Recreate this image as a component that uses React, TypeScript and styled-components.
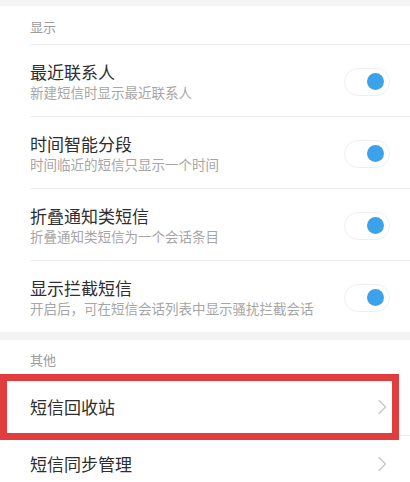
import React from "react";
import styled, { createGlobalStyle } from "styled-components";

const GlobalStyle = createGlobalStyle`
  html, body { margin: 0; padding: 0; background: #ffffff; }
  body { font-family: "Noto Sans CJK SC", "Noto Sans", sans-serif; -webkit-font-smoothing: antialiased; }
  * { box-sizing: border-box; }
`;

const Page = styled.div`
  display: flex;
  flex-direction: column;
  width: 410px;
  height: 482px;
  overflow: hidden;
  background: #ffffff;
`;

const Band = styled.div<{ $h: number }>`
  height: ${(p) => p.$h}px;
  flex: none;
  background: #f4f4f4;
`;

const SectionHeader = styled.div<{ $h: number; $pt: number }>`
  height: ${(p) => p.$h}px;
  flex: none;
  padding: ${(p) => p.$pt}px 0 0 30px;
  font-size: 13px;
  line-height: 18px;
  color: #9c9c9c;
`;

const Divider = styled.div`
  height: 1px;
  flex: none;
  margin-left: 30px;
  background: #ededed;
`;

const ToggleRowBox = styled.div<{ $h: number }>`
  height: ${(p) => p.$h}px;
  flex: none;
  display: flex;
  align-items: center;
  justify-content: space-between;
  padding: 2px 20px 0 30px;
`;

const TextBlock = styled.div`
  display: flex;
  flex-direction: column;
`;

const Title = styled.div`
  font-size: 17px;
  line-height: 22px;
  color: #2e2e2e;
`;

const Subtitle = styled.div`
  font-size: 13.5px;
  line-height: 19px;
  color: #a6a6a6;
`;

const Track = styled.div`
  width: 46px;
  height: 28px;
  border-radius: 14px;
  border: 1px solid #efefef;
  background: #ffffff;
  display: flex;
  align-items: center;
  justify-content: flex-end;
  padding-right: 5px;
  flex: none;
`;

const Knob = styled.div`
  width: 17px;
  height: 17px;
  border-radius: 50%;
  background: #3ba3ec;
`;

const NavRowBox = styled.div`
  position: relative;
  height: 56px;
  flex: none;
  display: flex;
  align-items: center;
  justify-content: space-between;
  padding: 0 22px 0 30px;
`;

const NavTitle = styled.div`
  font-size: 17px;
  line-height: 22px;
  color: #2e2e2e;
`;

const Highlight = styled.div`
  position: absolute;
  left: 0;
  right: 11px;
  top: -5px;
  bottom: -5px;
  border: 7px solid #e13c3e;
  pointer-events: none;
  z-index: 2;
`;

const Chevron = () => (
  <svg width="11" height="16" viewBox="0 0 11 16" fill="none">
    <path d="M2 1.5 L8.5 8 L2 14.5" stroke="#c6c6c6" strokeWidth="1.3" strokeLinecap="round" strokeLinejoin="round" />
  </svg>
);

type ToggleItem = { title: string; sub: string; h: number };

const toggles: ToggleItem[] = [
  { title: "最近联系人", sub: "新建短信时显示最近联系人", h: 71 },
  { title: "时间智能分段", sub: "时间临近的短信只显示一个时间", h: 71 },
  { title: "折叠通知类短信", sub: "折叠通知类短信为一个会话条目", h: 71 },
  { title: "显示拦截短信", sub: "开启后，可在短信会话列表中显示骚扰拦截会话", h: 71 },
];

export default function App() {
  return (
    <>
      <GlobalStyle />
      <Page>
        <Band $h={6} />
        <SectionHeader $h={38} $pt={12}>显示</SectionHeader>
        <Divider />
        {toggles.map((t, i) => (
          <React.Fragment key={t.title}>
            <ToggleRowBox $h={t.h}>
              <TextBlock>
                <Title>{t.title}</Title>
                <Subtitle>{t.sub}</Subtitle>
              </TextBlock>
              <Track>
                <Knob />
              </Track>
            </ToggleRowBox>
            {i < toggles.length - 1 && <Divider />}
          </React.Fragment>
        ))}
        <Band $h={8} />
        <SectionHeader $h={39} $pt={11}>其他</SectionHeader>
        <NavRowBox>
          <NavTitle>短信回收站</NavTitle>
          <Chevron />
          <Highlight />
        </NavRowBox>
        <Divider />
        <NavRowBox>
          <NavTitle>短信同步管理</NavTitle>
          <Chevron />
        </NavRowBox>
      </Page>
    </>
  );
}
